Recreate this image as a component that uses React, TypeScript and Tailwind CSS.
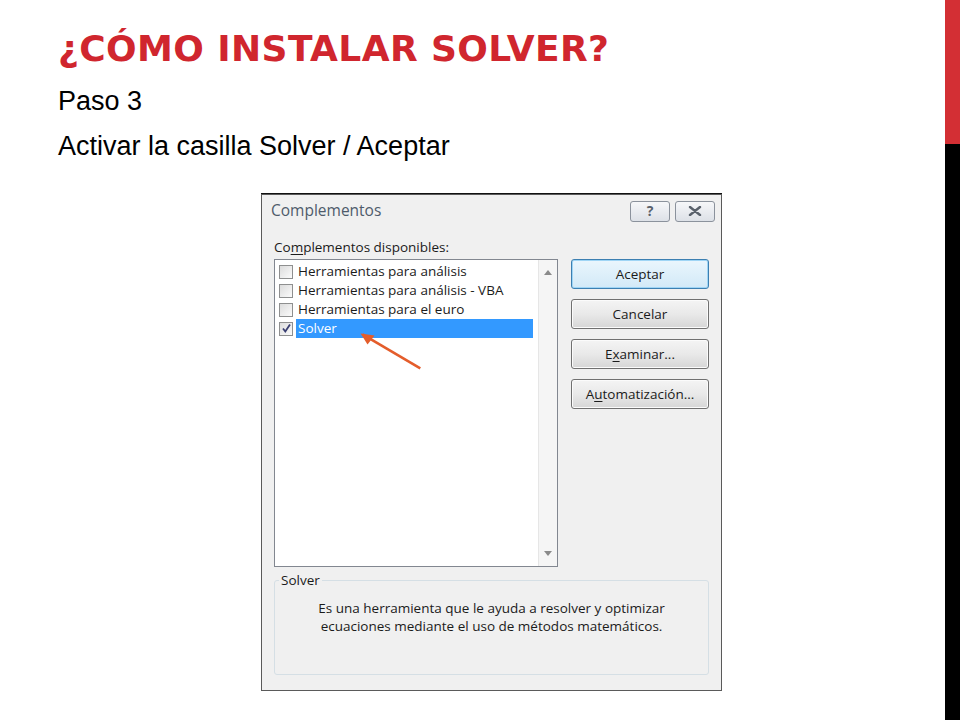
import React from "react";

const dlgFont = { fontFamily: '"Open Sans", "Noto Sans", sans-serif' };

function WinButton({ children, focused = false }: { children: React.ReactNode; focused?: boolean }) {
  return (
    <div
      className={
        "flex h-[30px] w-[138px] items-center justify-center rounded-[3px] border text-[13.5px] text-[#1b1b1b] " +
        (focused
          ? "border-[#3c7fb1] bg-gradient-to-b from-[#eaf6fd] to-[#d2e9f7] shadow-[inset_0_0_0_1px_#9fd5f5]"
          : "border-[#707070] bg-gradient-to-b from-[#f4f4f4] via-[#e9e9e9] to-[#d6d6d6] shadow-[inset_0_0_0_1px_#fbfbfb]")
      }
    >
      {children}
    </div>
  );
}

function CheckBox({ checked = false }: { checked?: boolean }) {
  return (
    <div className="flex h-[14px] w-[14px] shrink-0 items-center justify-center border border-[#8e8f8f] bg-gradient-to-br from-[#dcdcdc] to-[#fbfbfb]">
      {checked && (
        <svg viewBox="0 0 11 11" className="h-[11px] w-[11px]">
          <path d="M2 5.5 L4.3 8.5 L9 1.5" fill="none" stroke="#3a3f72" strokeWidth="1.8" />
        </svg>
      )}
    </div>
  );
}

const items = [
  "Herramientas para análisis",
  "Herramientas para análisis - VBA",
  "Herramientas para el euro",
];

export default function App() {
  return (
    <div className="flex h-[720px] w-[960px] overflow-hidden bg-white">
      <div className="relative flex-1 pl-[58px] pt-[29px]">
        <h1
          className="text-[36px] font-bold leading-[40px] tracking-[0.4px] text-[#d0262e]"
          style={{ fontFamily: '"DejaVu Sans", sans-serif' }}
        >
          ¿CÓMO INSTALAR SOLVER?
        </h1>
        <div className="text-[27px] leading-[30px] text-black" style={{ fontFamily: '"Liberation Sans", Arial, sans-serif' }}>
          <p className="mt-[17px]">Paso 3</p>
          <p className="mt-[15px]">Activar la casilla Solver / Aceptar</p>
        </div>

        {/* dialog */}
        <div
          className="relative ml-[203px] mt-[33px] flex h-[497px] w-[461px] flex-col border border-[#5a5a5a] bg-[#f0f0f0] shadow-[0_-1px_0_#111]"
          style={dlgFont}
        >
          <div className="flex h-[30px] items-center justify-between pl-[9px] pr-[6px] pt-[2px]">
            <span className="text-[15.5px] text-[#4e5b6b]">Complementos</span>
            <div className="flex gap-[5px]">
              <div className="flex h-[21px] w-[40px] items-center justify-center rounded-[3px] border border-[#8b929c] bg-gradient-to-b from-[#f6f7f9] to-[#dde1e7] text-[14px] font-bold leading-none text-[#59616b]">
                ?
              </div>
              <div className="flex h-[21px] w-[40px] items-center justify-center rounded-[3px] border border-[#8b929c] bg-gradient-to-b from-[#f6f7f9] to-[#dde1e7]">
                <svg viewBox="0 0 14 10" className="h-[10px] w-[14px]">
                  <path d="M2 1 L12 9 M12 1 L2 9" stroke="#59616b" strokeWidth="2.4" strokeLinecap="round" />
                </svg>
              </div>
            </div>
          </div>

          <div className="flex flex-1 flex-col px-[12px] pt-[13px]">
            <div className="text-[13.5px] leading-[18px] text-[#1b1b1b]">
              Co<span className="underline underline-offset-2">m</span>plementos disponibles:
            </div>
            <div className="mt-[3px] flex gap-[13px]">
              <div className="flex h-[308px] w-[284px] border border-[#828790] bg-white">
                <div className="flex flex-1 flex-col pl-[4px] pr-[5px] pt-[2px] text-[13.5px] text-[#1b1b1b]">
                  {items.map((t) => (
                    <div key={t} className="flex h-[19px] items-center gap-[5px]">
                      <CheckBox />
                      <span>{t}</span>
                    </div>
                  ))}
                  <div className="flex h-[19px] items-center gap-[3px]">
                    <CheckBox checked />
                    <span className="flex h-[19px] flex-1 items-center bg-[#3399ff] pl-[2px] text-white">Solver</span>
                  </div>
                </div>
                <div className="flex w-[19px] flex-col items-center justify-between border-l border-[#e6e6e6] bg-[#f5f5f5] py-[10px]">
                  <svg viewBox="0 0 8 5" className="h-[5px] w-[8px]">
                    <path d="M0 5 L4 0 L8 5 Z" fill="#8a8a8a" />
                  </svg>
                  <svg viewBox="0 0 8 5" className="h-[5px] w-[8px]">
                    <path d="M0 0 L8 0 L4 5 Z" fill="#8a8a8a" />
                  </svg>
                </div>
              </div>
              <div className="flex flex-col gap-[10px]">
                <WinButton focused>Aceptar</WinButton>
                <WinButton>Cancelar</WinButton>
                <WinButton>
                  <span>
                    E<span className="underline underline-offset-2">x</span>aminar...
                  </span>
                </WinButton>
                <WinButton>
                  <span>
                    A<span className="underline underline-offset-2">u</span>tomatización...
                  </span>
                </WinButton>
              </div>
            </div>

            <div className="relative mt-[13px] h-[95px] w-[435px] rounded-[3px] border border-[#d5dfe5] pt-[18px]">
              <span className="absolute left-[4px] top-[-10px] bg-[#f0f0f0] px-[2px] text-[13.5px] leading-[18px] text-[#1b1b1b]">
                Solver
              </span>
              <p className="text-center text-[13.5px] leading-[18px] text-[#1b1b1b]">
                Es una herramienta que le ayuda a resolver y optimizar
                <br />
                ecuaciones mediante el uso de métodos matemáticos.
              </p>
            </div>
          </div>

          {/* arrow overlay */}
          <svg className="absolute left-0 top-0 h-full w-full" viewBox="0 0 461 497" style={{ pointerEvents: "none" }}>
            <path d="M159 174 L101 140" stroke="#e45d2b" strokeWidth="2.6" />
            <path d="M99 139 L113 141 L106 150 Z" fill="#e45d2b" />
          </svg>
        </div>
      </div>
      <div className="flex w-[15px] flex-col">
        <div className="h-[144px] bg-[#d32f34]" />
        <div className="flex-1 bg-black" />
      </div>
    </div>
  );
}
